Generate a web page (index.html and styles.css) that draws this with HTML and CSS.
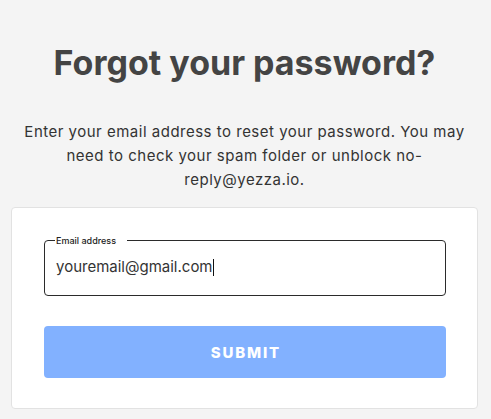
FILE: index.html
```html
<!DOCTYPE html>
<html lang="en">
<head>
<meta charset="utf-8">
<title>Forgot your password?</title>
<link rel="stylesheet" href="styles.css">
</head>
<body>
  <main class="page">
    <h1 class="title">Forgot your password?</h1>
    <p class="intro">Enter your email address to reset your password. You may need to check your spam folder or unblock no-reply@yezza.io.</p>
    <form class="card">
      <fieldset class="field">
        <legend class="field-label">Email address</legend>
        <div class="field-value">youremail@gmail.com<span class="caret"></span></div>
      </fieldset>
      <button type="button" class="submit">SUBMIT</button>
    </form>
  </main>
</body>
</html>
```

FILE: styles.css
```css
html, body {
  margin: 0;
  padding: 0;
  background: #f4f4f4;
}

body {
  font-family: Inter, "Noto Sans", "Liberation Sans", sans-serif;
  color: #333;
}

.page {
  display: flex;
  flex-direction: column;
  padding: 0 13px 0 11px;
}

.title {
  margin: 42.5px 0 0;
  font-size: 34px;
  line-height: 40px;
  font-weight: 700;
  color: #444;
  text-align: center;
}

.intro {
  margin: 37px 6px 0;
  font-size: 15px;
  line-height: 24px;
  letter-spacing: 0.5px;
  color: #333;
  text-align: center;
}

.card {
  margin-top: 15.5px;
  background: #fff;
  border: 1px solid #e2e2e2;
  border-radius: 4px;
  padding: 27px 31px 30px 32px;
  display: flex;
  flex-direction: column;
  gap: 30px;
}

.field {
  margin: 0;
  border: 1px solid #2b2b2b;
  border-radius: 4px;
  padding: 11px 11px 18px;
  min-width: 0;
}

.field-label {
  margin-left: -1px;
  padding: 0 11px 0 1px;
  font-size: 9px;
  line-height: 11px;
  font-weight: 500;
  color: #222;
}

.field-value {
  font-size: 15px;
  line-height: 20px;
  color: #333;
  display: flex;
  align-items: center;
}

.caret {
  display: inline-block;
  width: 1px;
  height: 17px;
  background: #111;
}

.submit {
  height: 52px;
  border: none;
  border-radius: 4px;
  background: #82b1ff;
  color: #fff;
  font-family: Inter, "Noto Sans", "Liberation Sans", sans-serif;
  font-size: 15px;
  font-weight: 800;
  letter-spacing: 1.8px;
  padding: 0 0 0 1.8px;
}
```
